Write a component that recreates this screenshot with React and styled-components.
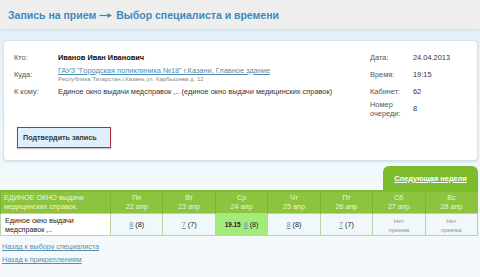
import React from "react";
import styled, { createGlobalStyle } from "styled-components";

const GlobalStyle = createGlobalStyle`
  html, body { margin: 0; padding: 0; }
  body {
    width: 480px;
    height: 277px;
    overflow: hidden;
    font-family: "Liberation Sans", Arial, sans-serif;
    background: linear-gradient(#e1f0f9, #f4f9fc 70%);
  }
`;

const Page = styled.div`
  display: flex;
  flex-direction: column;
  width: 480px;
`;

const TitleBar = styled.div`
  height: 29px;
  display: flex;
  align-items: center;
  gap: 3px;
  padding: 0 8px;
  background: #eeeeee;
  box-shadow: 0 1px 2px rgba(150, 170, 180, 0.35);
  color: #3b8bc0;
  font-size: 10.5px;
  font-weight: bold;
`;

const Content = styled.div`
  padding: 11px 2px 0 3px;
  display: flex;
  flex-direction: column;
`;

const Card = styled.div`
  background: #fff;
  border: 1px solid #d3e2eb;
  border-radius: 4px;
  box-shadow: 0 1px 2px rgba(170, 195, 210, 0.4);
  padding: 8px 10px 10px;
  height: 101px;
`;

const InfoRow = styled.div`
  display: flex;
  justify-content: space-between;
`;

const InfoGrid = styled.div`
  display: grid;
  grid-template-columns: ${(p) => p.$label}px ${(p) => p.$value};
  grid-auto-rows: 17px;
  align-items: center;
  font-size: 7.4px;
  color: #222;
`;

const Label = styled.div`
  color: #555;
  line-height: 9px;
`;

const Value = styled.div`
  font-weight: ${(p) => (p.$bold ? "bold" : "normal")};
  color: ${(p) => (p.$bold ? "#111" : "#333")};
  line-height: 9px;
  white-space: nowrap;
`;

const PlaceLink = styled.a`
  display: block;
  color: #4b8cae;
  text-decoration: underline;
`;

const Address = styled.span`
  display: block;
  color: #888;
  font-size: 6px;
`;

const ConfirmButton = styled.button`
  margin: 10px 0 0 3px;
  width: 94px;
  height: 21px;
  border: 1px solid #b02c3e;
  background: #def0fb;
  color: #2d3b48;
  font-family: inherit;
  font-size: 7.2px;
  font-weight: bold;
  text-align: left;
  padding: 0 0 0 5px;
  box-shadow: 0 1px 1px rgba(120, 60, 60, 0.3);
`;

const TabRow = styled.div`
  display: flex;
  justify-content: flex-end;
  margin-top: 5px;
`;

const WeekTab = styled.a`
  width: 95px;
  height: 24px;
  display: flex;
  align-items: center;
  justify-content: center;
  background: #7cbc2c;
  border-radius: 6px 6px 0 0;
  color: #fff;
  font-size: 7.4px;
  font-weight: bold;
  text-decoration: underline;
`;

const Table = styled.table`
  width: 478px;
  margin-left: -3px;
  border-collapse: collapse;
  table-layout: fixed;
  border-top: 2px solid #7cbc2c;
  font-size: 7.2px;
`;

const HeadCell = styled.th`
  height: 21px;
  background: #8cc43f;
  color: #e9f6d8;
  font-weight: normal;
  line-height: 8.5px;
  text-align: ${(p) => (p.$left ? "left" : "center")};
  padding: 0 ${(p) => (p.$left ? "3px" : "0")};
  border-left: 1px solid #7fb537;
`;

const Cell = styled.td`
  height: 21px;
  background: ${(p) => (p.$active ? "#a4ec7a" : p.$left ? "#fff" : "#f1f8fb")};
  border: 1px solid #bcd3a8;
  text-align: ${(p) => (p.$left ? "left" : "center")};
  padding: 0 ${(p) => (p.$left ? "4px" : "0")};
  color: #222;
  line-height: 9px;
`;

const SlotLink = styled.a`
  color: #6f93ad;
  text-decoration: underline;
`;

const Time = styled.b`
  font-size: 6.4px;
  margin-right: 3px;
`;

const Closed = styled.span`
  color: #8a9696;
  font-size: 6px;
  line-height: 8px;
`;

const Links = styled.div`
  display: flex;
  flex-direction: column;
  gap: 5px;
  padding: 7px 0 0 0;
  margin-left: -1px;
`;

const BackLink = styled.a`
  color: #5b8cae;
  font-size: 7.2px;
  text-decoration: underline;
  line-height: 8px;
`;

const Arrow = () => (
  <svg width="14" height="8" viewBox="0 0 14 8">
    <path d="M0.5 4.5H11" stroke="#3b8bc0" strokeWidth="1.2" />
    <path d="M8.5 2L13 4.5L8.5 7Z" fill="#3b8bc0" />
  </svg>
);

const days = [
  { d: "Пн", date: "22 апр", slot: "8", total: "(8)" },
  { d: "Вт", date: "23 апр", slot: "7", total: "(7)" },
  { d: "Ср", date: "24 апр", slot: "8", total: "(8)", time: "19.15", active: true },
  { d: "Чт", date: "25 апр", slot: "8", total: "(8)" },
  { d: "Пт", date: "26 апр", slot: "7", total: "(7)" },
  { d: "Сб", date: "27 апр" },
  { d: "Вс", date: "28 апр" },
];

export default function App() {
  return (
    <Page>
      <GlobalStyle />
      <TitleBar>
        <span>Запись на прием</span>
        <Arrow />
        <span>Выбор специалиста и времени</span>
      </TitleBar>
      <Content>
        <Card>
          <InfoRow>
            <InfoGrid $label={44} $value="auto">
              <Label>Кто:</Label>
              <Value $bold>Иванов Иван Иванович</Value>
              <Label>Куда:</Label>
              <Value>
                <PlaceLink>ГАУЗ "Городская поликлиника №18" г.Казани, Главное здание</PlaceLink>
                <Address>Республика Татарстан,г.Казань,ул. Карбышева д. 12</Address>
              </Value>
              <Label>К кому:</Label>
              <Value>Единое окно выдачи медсправок ,.. (единое окно выдачи медицинских справок)</Value>
            </InfoGrid>
            <InfoGrid $label={43} $value="54px">
              <Label>Дата:</Label>
              <Value>24.04.2013</Value>
              <Label>Время:</Label>
              <Value>19:15</Value>
              <Label>Кабинет:</Label>
              <Value>62</Value>
              <Label>
                Номер
                <br />
                очереди:
              </Label>
              <Value>8</Value>
            </InfoGrid>
          </InfoRow>
          <ConfirmButton>Подтвердить запись</ConfirmButton>
        </Card>
        <TabRow>
          <WeekTab>Следующая неделя</WeekTab>
        </TabRow>
        <Table>
          <colgroup>
            <col style={{ width: 110 }} />
            {days.map((x) => (
              <col key={x.d} />
            ))}
          </colgroup>
          <thead>
            <tr>
              <HeadCell $left>ЕДИНОЕ ОКНО выдачи медицинских справок.</HeadCell>
              {days.map((x) => (
                <HeadCell key={x.d}>
                  {x.d}
                  <br />
                  {x.date}
                </HeadCell>
              ))}
            </tr>
          </thead>
          <tbody>
            <tr>
              <Cell $left>
                Единое окно выдачи
                <br />
                медсправок ,..
              </Cell>
              {days.map((x) => (
                <Cell key={x.d} $active={x.active}>
                  {x.slot ? (
                    <>
                      {x.time && <Time>{x.time}</Time>}
                      <SlotLink>{x.slot}</SlotLink> {x.total}
                    </>
                  ) : (
                    <Closed>
                      Нет
                      <br />
                      приема
                    </Closed>
                  )}
                </Cell>
              ))}
            </tr>
          </tbody>
        </Table>
        <Links>
          <BackLink>Назад к выбору специалиста</BackLink>
          <BackLink>Назад к прикреплениям</BackLink>
        </Links>
      </Content>
    </Page>
  );
}
